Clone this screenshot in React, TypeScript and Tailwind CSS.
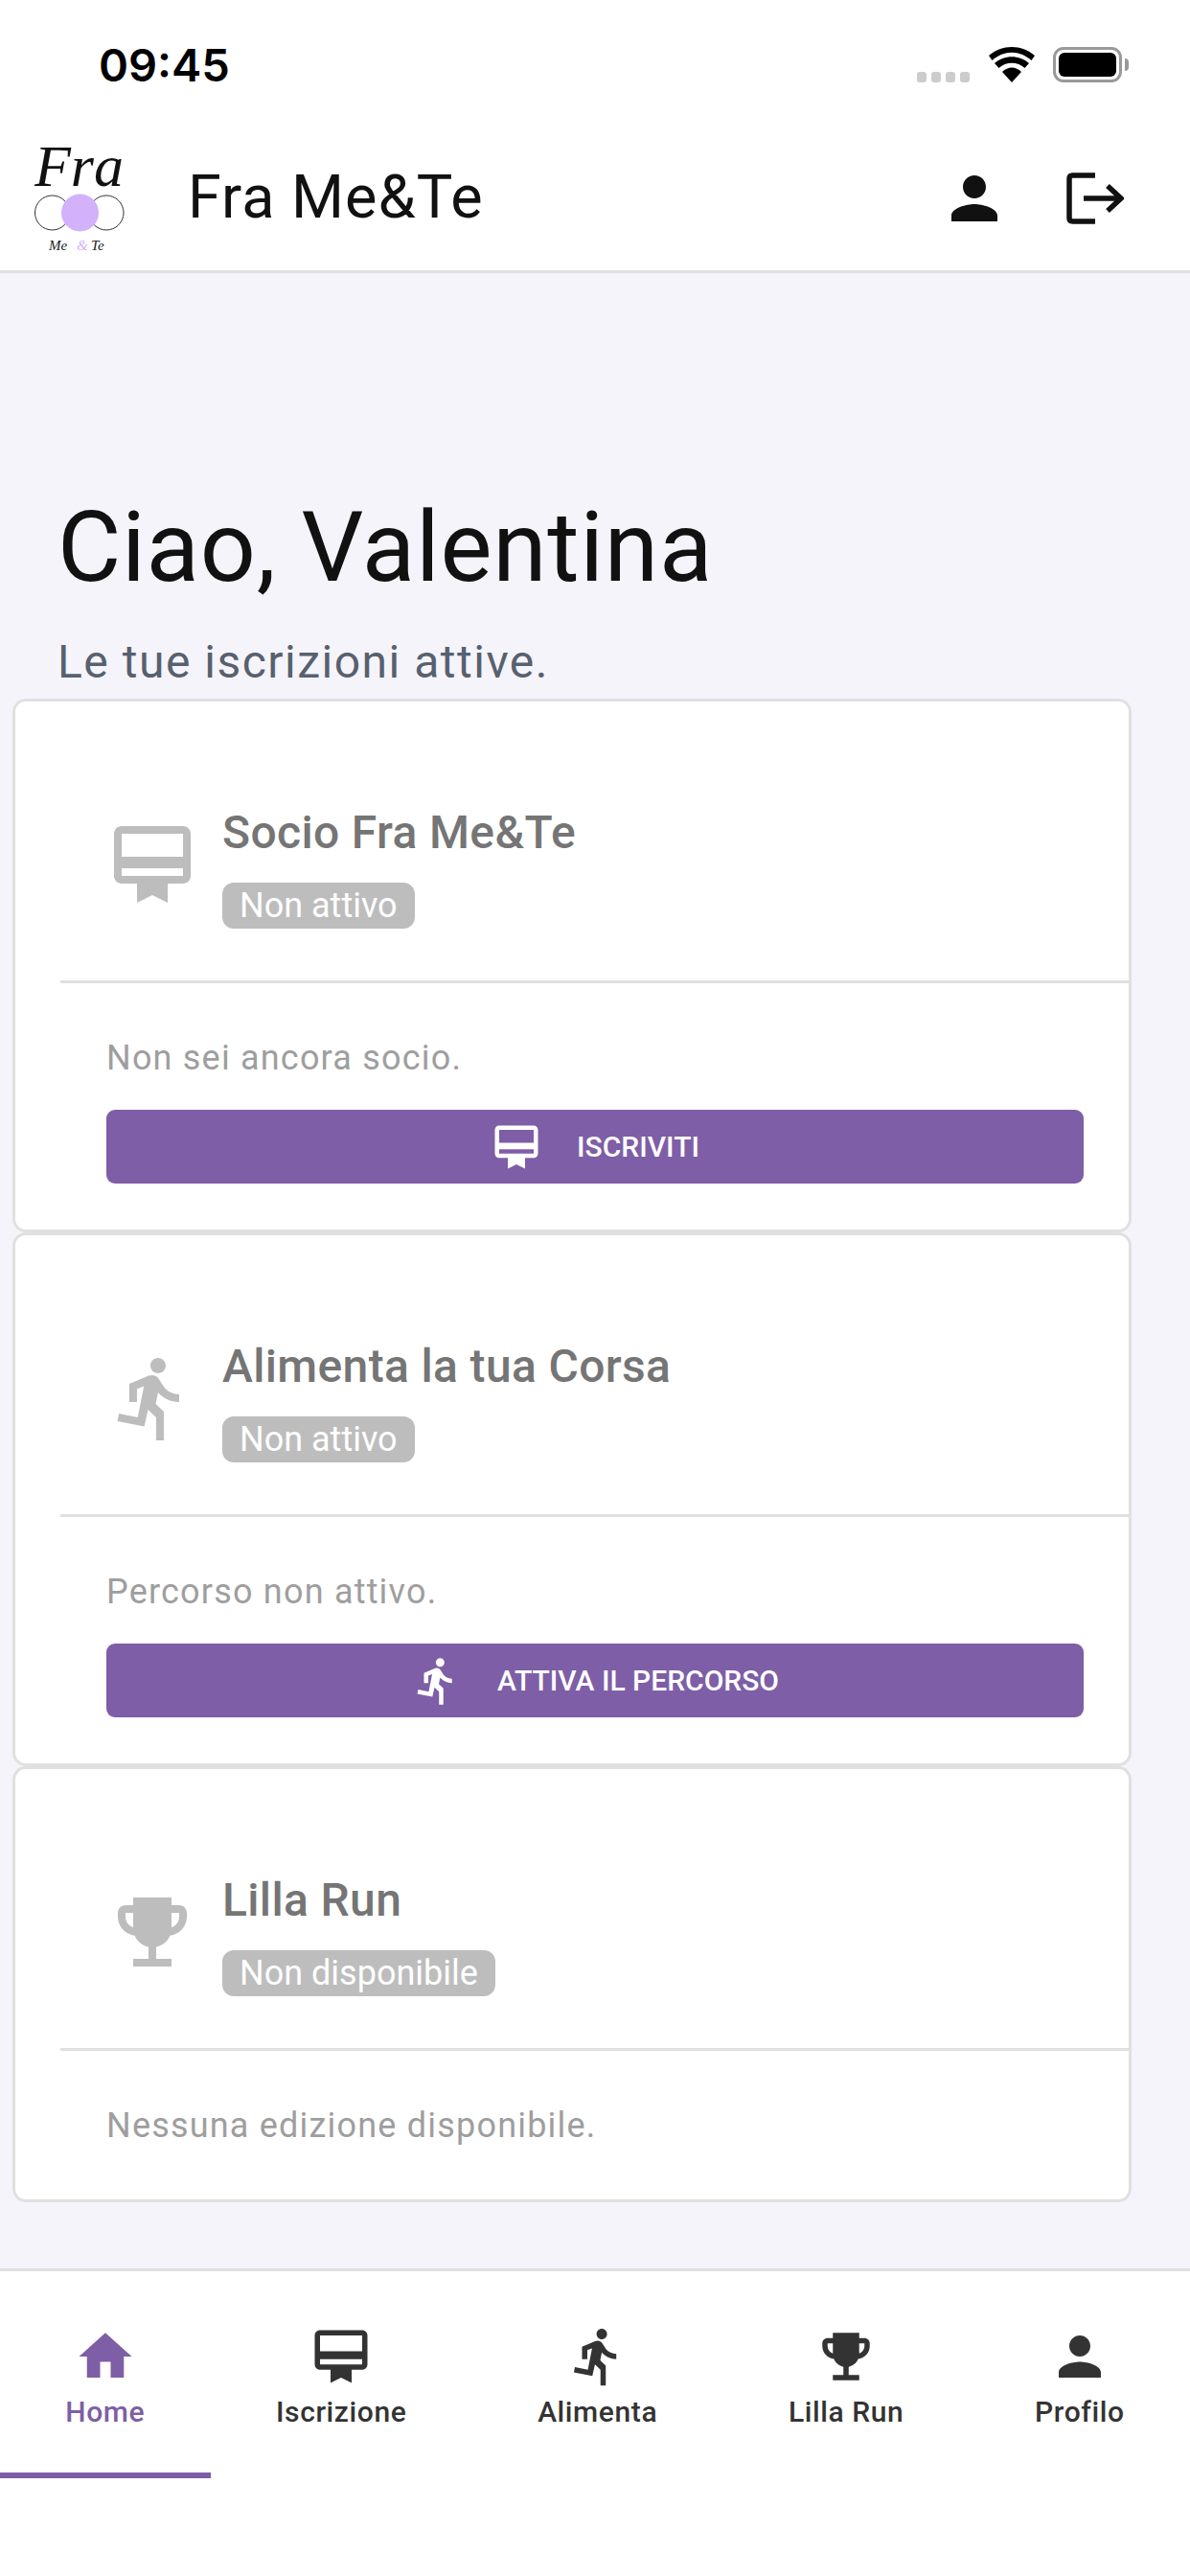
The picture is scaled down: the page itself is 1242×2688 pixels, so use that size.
const P = "#7e5ea6";
const CARD = "M20 2H4c-1.11 0-2 .89-2 2v11c0 1.11.89 2 2 2h4v5l4-2 4 2v-5h4c1.11 0 2-.89 2-2V4c0-1.11-.89-2-2-2zm0 13H4v-2h16v2zm0-5H4V4h16v6z";
const RUN = "M13.49 5.48c1.1 0 2-.9 2-2s-.9-2-2-2-2 .9-2 2 .9 2 2 2zm-3.6 13.9l1-4.4 2.1 2v6h2v-7.5l-2.1-2 .6-3c1.3 1.5 3.3 2.5 5.5 2.5v-2c-1.9 0-3.5-1-4.3-2.4l-1-1.6c-.4-.6-1-1-1.7-1-.3 0-.5.1-.8.1l-5.2 2.2v4.7h2v-3.4l1.8-.7-1.6 8.1-4.9-1-.4 2 7 1.4z";
const CUP = "M19 5h-2V3H7v2H5c-1.1 0-2 .9-2 2v1c0 2.55 1.92 4.63 4.39 4.94.63 1.5 1.98 2.63 3.61 2.96V19H7v2h10v-2h-4v-3.1c1.63-.33 2.98-1.46 3.61-2.96C19.08 12.63 21 10.55 21 8V7c0-1.1-.9-2-2-2zM5 8V7h2v3.82C5.84 10.4 5 9.3 5 8zm14 0c0 1.3-.84 2.4-2 2.82V7h2v1z";
const USER = "M12 12c2.21 0 4-1.79 4-4s-1.79-4-4-4-4 1.79-4 4 1.79 4 4 4zm0 2c-2.67 0-8 1.34-8 4v2h16v-2c0-2.66-5.33-4-8-4z";
const HOME = "M10 20v-6h4v6h5v-8h3L12 3 2 12h3v8z";

function Icon({ d, size, color, className }: { d: string; size: number; color: string; className?: string }) {
  return (
    <svg width={size} height={size} viewBox="0 0 24 24" fill={color} className={"shrink-0 block " + (className ?? "")}>
      <path d={d} />
    </svg>
  );
}

function Logo() {
  return (
    <svg width="100" height="130" viewBox="0 0 100 130" className="block shrink-0 mb-[14px]">
      <text x="0" y="59" fontFamily="'Liberation Serif', serif" fontStyle="italic" fontSize="62" fill="#111">Fra</text>
      <circle cx="18.500" cy="87" r="18" fill="none" stroke="#333" strokeWidth="1" />
      <circle cx="75" cy="87" r="18" fill="none" stroke="#333" strokeWidth="1" />
      <circle cx="47.500" cy="87" r="19.500" fill="#d3b1fb" />
      <text x="15" y="126" fontFamily="'Liberation Serif', serif" fontStyle="italic" fontSize="15" fill="#222">Me</text>
      <text x="44" y="126" fontFamily="'Liberation Serif', serif" fontStyle="italic" fontSize="15" fill="#d3b1fb">&amp;</text>
      <text x="59" y="126" fontFamily="'Liberation Serif', serif" fontStyle="italic" fontSize="15" fill="#222">Te</text>
    </svg>
  );
}

function StatusBar() {
  return (
    <div className="h-[141px] pl-[103px] pr-[64px] pt-[41px] flex items-start justify-between">
      <span className="text-[47px] leading-[54px] font-semibold text-black font-['Inter',sans-serif]">09:45</span>
      <div className="flex items-end pt-[8px]">
        <div className="flex gap-[5px] mr-[20px]">
          {[0, 1, 2, 3].map((i) => (
            <span key={i} className="block w-[10px] h-[11px] rounded-[3px] bg-[#cccccc]" />
          ))}
        </div>
        <svg width="48" height="37" viewBox="0 0 48 37" className="block mr-[19px]">
          <path d="M24 37 L14 26 C20 20 28 20 34 26 Z" fill="#000" />
          <path d="M10.5 22 L6 17 C16 8 32 8 42 17 L37.5 22 C30 15 18 15 10.5 22 Z" fill="#000" />
          <path d="M3.5 14 L0 9 C14 -3 34 -3 48 9 L44.5 14 C32 3 16 3 3.5 14 Z" fill="#000" />
        </svg>
        <div className="flex items-center">
          <div className="w-[72px] h-[37px] rounded-[11px] border-[3px] border-[#999999] p-[3px]">
            <div className="w-full h-full rounded-[6px] bg-black" />
          </div>
          <div className="w-[4px] h-[13px] ml-[3px] rounded-r-[4px] bg-[#999999]" />
        </div>
      </div>
    </div>
  );
}

function Header() {
  return (
    <div className="h-[144px] border-b-[3px] border-[#e0e0e0] bg-white flex items-center pl-[36px] pr-[69px] pb-[9px]">
      <Logo />
      <span className="ml-[60px] mb-[3px] text-[63px] leading-[70px] tracking-[1px] text-[#111111] font-['Roboto',sans-serif]">Fra Me&amp;Te</span>
      <div className="ml-auto flex items-center gap-[60px]">
        <Icon d={USER} size={72} color="#111111" />
        <svg width="60" height="54" viewBox="0 0 60 54" className="block shrink-0">
          <path d="M30 3H6.500Q3 3 3 6.500V47.500Q3 51 6.500 51H30" fill="none" stroke="#111111" strokeWidth="5.500" />
          <path d="M18 27H56" fill="none" stroke="#111111" strokeWidth="5.500" />
          <path d="M43 14L57 27L43 40" fill="none" stroke="#111111" strokeWidth="5.500" />
        </svg>
      </div>
    </div>
  );
}

function StatusCard({ icon, title, badge, text, action, actionIcon }: { icon: string; title: string; badge: string; text: string; action?: string; actionIcon?: string }) {
  return (
    <div className="w-[1168px] ml-[13px] bg-white border-[3px] border-[#e0e0e0] rounded-[14px] font-['Roboto',sans-serif]">
      <div className="h-[291px] pl-[95px] pt-[55px] flex items-center">
        <Icon d={icon} size={96} color="#bdbdbd" className="mb-[6px]" />
        <div className="ml-[25px]">
          <div className="text-[48px] leading-[56px] tracking-[0.35px] font-medium text-[#757575]">{title}</div>
          <div className="mt-[24px] w-fit h-[48px] rounded-[12px] bg-[#bdbdbd] px-[18px] text-[36px] leading-[48px] text-white">{badge}</div>
        </div>
      </div>
      <div className="ml-[47px] h-[3px] bg-[#e0e0e0]" />
      <div className={action ? "pl-[95px] pr-[47px] pt-[56px] pb-[48px]" : "pl-[95px] pr-[47px] pt-[56px] pb-[55px]"}>
        <div className="text-[36px] leading-[44px] tracking-[1.2px] text-[#9e9e9e]">{text}</div>
        {action && actionIcon && (
          <div className="mt-[32px] h-[77px] rounded-[9px] bg-[#7e5ea6] flex items-center justify-center">
            <Icon d={actionIcon} size={54} color="#ffffff" />
            <span className="ml-[36px] text-[30px] font-medium text-white">{action}</span>
          </div>
        )}
      </div>
    </div>
  );
}

function Tab({ d, label, active }: { d: string; label: string; active?: boolean }) {
  const color = active ? P : "#333333";
  return (
    <div className={active ? "flex-auto h-[216px] pt-[56px] flex flex-col items-center border-b-[6px] border-[#7e5ea6]" : "flex-auto h-[216px] pt-[56px] flex flex-col items-center"}>
      <Icon d={d} size={66} color={color} />
      <span className={active ? "mt-[7px] text-[30px] leading-[36px] tracking-[0.6px] font-medium text-[#7e5ea6]" : "mt-[7px] text-[30px] leading-[36px] tracking-[0.6px] font-medium text-[#333333]"}>{label}</span>
    </div>
  );
}

export default function App() {
  return (
    <div className="w-[1242px] h-[2688px] flex flex-col bg-white overflow-hidden font-['Roboto',sans-serif]">
      <StatusBar />
      <Header />
      <main className="flex-1 bg-[#f6f4fb] pt-[226px]">
        <h1 className="ml-[60px] text-[102px] leading-[120px] tracking-[0.7px] text-[#111111]">Ciao, Valentina</h1>
        <p className="ml-[60px] mt-[32px] text-[48px] leading-[56px] tracking-[1.5px] text-[#56616f]">Le tue iscrizioni attive.</p>
        <div className="mt-[10px] flex flex-col">
          <StatusCard icon={CARD} title="Socio Fra Me&Te" badge="Non attivo" text="Non sei ancora socio." action="ISCRIVITI" actionIcon={CARD} />
          <StatusCard icon={RUN} title="Alimenta la tua Corsa" badge="Non attivo" text="Percorso non attivo." action="ATTIVA IL PERCORSO" actionIcon={RUN} />
          <StatusCard icon={CUP} title="Lilla Run" badge="Non disponibile" text="Nessuna edizione disponibile." />
        </div>
      </main>
      <nav className="h-[321px] bg-white border-t-[3px] border-[#e0e0e0] flex items-start">
        <Tab d={HOME} label="Home" active />
        <Tab d={CARD} label="Iscrizione" />
        <Tab d={RUN} label="Alimenta" />
        <Tab d={CUP} label="Lilla Run" />
        <Tab d={USER} label="Profilo" />
      </nav>
    </div>
  );
}
